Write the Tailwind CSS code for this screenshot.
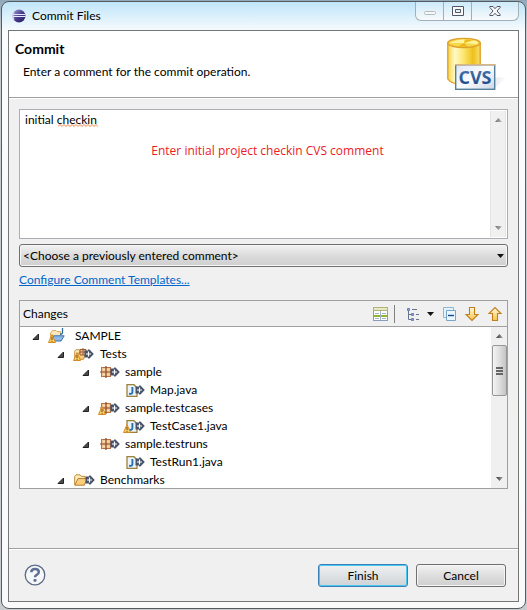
<!DOCTYPE html>
<html lang="en">
<head>
<meta charset="utf-8">
<meta name="viewport" content="width=device-width, initial-scale=1">
<title>Commit Files</title>
<script src="https://cdn.jsdelivr.net/npm/@tailwindcss/browser@4"></script>
</head>
<body class="bg-linear-to-b from-[#8fa9bb] to-[#c8ccce] to-5% font-['Lato','Open_Sans',sans-serif] text-[12px] leading-[18px] text-black">

<!-- Shared icon parts -->
<svg class="absolute size-0" aria-hidden="true">
  <defs>
    <linearGradient id="gold" x1="0" y1="0" x2="0" y2="1"><stop offset="0" stop-color="#fffbe0"/><stop offset="1" stop-color="#f7c545"/></linearGradient>
    <linearGradient id="cyl" x1="0" x2="1" y1="0" y2="0"><stop offset="0" stop-color="#f5d548"/><stop offset=".22" stop-color="#fffac8"/><stop offset=".5" stop-color="#fbe56a"/><stop offset=".78" stop-color="#efc01c"/><stop offset="1" stop-color="#f8e070"/></linearGradient>
    <linearGradient id="card" x1="0" x2="1" y1="0" y2="1"><stop offset="0" stop-color="#dfe6f2"/><stop offset=".5" stop-color="#fbfcff"/><stop offset="1" stop-color="#ccd6ea"/></linearGradient>
    <linearGradient id="shade" x1="0" x2="1" y1="0" y2="0"><stop offset="0" stop-color="#9a9ab8"/><stop offset="1" stop-color="#ffffff"/></linearGradient>
    <linearGradient id="orb" x1="0" x2="1" y1="0" y2="1"><stop offset="0" stop-color="#a9a4d6"/><stop offset=".5" stop-color="#483c8c"/><stop offset="1" stop-color="#241c5c"/></linearGradient>
    <linearGradient id="cvsText" x1="0" x2="0" y1="0" y2="1"><stop offset="0" stop-color="#5380b4"/><stop offset="1" stop-color="#123f80"/></linearGradient>
    <linearGradient id="fade" x1="0" x2="1" y1="0" y2="0"><stop offset="0" stop-color="#333"/><stop offset="1" stop-color="#aaa"/></linearGradient>
    <symbol id="expanded" viewBox="0 0 7 7"><path d="M6.5 1V6.5H1Z" fill="#4b4b4b" stroke="#222"/></symbol>
    <symbol id="outgoing" viewBox="0 0 10 10"><path d="M.5 1.5H4V.5H5.5L9.8 5 5.5 9.5H4V8.5H.5Z" fill="#46526a"/><path d="M2 5H7M4.5 2.5V7.5" stroke="#fff" stroke-width="1.2"/></symbol>
    <symbol id="warning" viewBox="0 0 8 9"><path d="M4 .6 7.5 8.5H.5Z" fill="#fbcf62" stroke="#d68a25" stroke-linejoin="round"/><path d="M4 3V6M4 6.8V7.8" stroke="#6a4408" stroke-width="1"/></symbol>
    <symbol id="package" viewBox="0 0 12 12"><rect x="1.5" y="1.5" width="9" height="9" fill="#f3c796" stroke="#b87344"/><path d="M6 0V12M0 6H12" stroke="#8a4a26" stroke-width="1.2"/><path d="M3.5 3.5h1M7.5 3.5h1M3.5 8.5h1M7.5 8.5h1" stroke="#fff0d8"/></symbol>
    <symbol id="javafile" viewBox="0 0 12 13"><path d="M1 .7H8L11 3.7V12.3H1Z" fill="#eaf2fc" stroke="#9b8238" stroke-width="1.3"/><path d="M6.4 3V8.3Q6.4 10.3 3 9.8" fill="none" stroke="#2c6fa8" stroke-width="1.9"/></symbol>
    <symbol id="folder" viewBox="0 0 14 12"><path d="M.7 10.8V2.3L2 .8H6L7.3 2.3H11V4.5" fill="#fdebb8" stroke="#c08a3a"/><path d="M.8 11.2 4 4.6H13.2L10.2 11.2Z" fill="#f9cf7c" stroke="#b97c30"/></symbol>
    <symbol id="arrowUp" viewBox="0 0 7 4"><path d="M3.5 0 7 4H0Z" fill="url(#fade)"/></symbol>
    <symbol id="arrowDown" viewBox="0 0 7 4"><path d="M0 0H7L3.5 4Z" fill="url(#fade)"/></symbol>
    <symbol id="caret" viewBox="0 0 7 4"><path d="M0 0H7L3.5 4Z" fill="#111"/></symbol>
  </defs>
</svg>

<div class="flex min-h-screen flex-col p-px">
<main class="flex flex-1 flex-col rounded-lg border border-[#565b5f] bg-linear-to-b from-[#bfe5fa] via-[#fafcfd] via-5% to-[#fafafa] px-1.5 pb-1.5">

  <!-- Title bar -->
  <header class="flex h-7 items-start justify-between pl-1">
    <div class="flex items-center gap-1.5 pt-[5px]">
      <svg class="h-3.5 w-3.5" viewBox="0 0 14 14" aria-hidden="true"><circle cx="7" cy="7" r="6.5" fill="url(#orb)"/><path d="M.5 5.5H13.5M.3 7.5H13.7" stroke="#e6e6fa" stroke-width="1"/><path d="M2 3.5Q0 7 2 11" fill="none" stroke="#d8d0ec" stroke-width="1"/></svg>
      <h1>Commit Files</h1>
    </div>
    <div class="flex h-[19px] divide-x divide-[#a3afb6] rounded-b-md border border-t-0 border-[#a3afb6] bg-linear-to-b from-[#cdeafa] to-[#f8fafb]">
      <button type="button" aria-label="Minimize" class="flex w-7 items-center justify-center pt-1"><svg class="h-1 w-3" viewBox="0 0 12 4"><rect x=".5" y=".5" width="11" height="3" rx="1" fill="#f7f7f7" stroke="#b4bcc0"/></svg></button>
      <button type="button" aria-label="Maximize" class="flex w-7 items-center justify-center"><svg class="h-2.5 w-3" viewBox="0 0 12 10"><path d="M.5 .5H11.5V9.5H.5ZM3.5 3.5V6.5H8.5V3.5Z" fill="#f8f8f8" fill-rule="evenodd" stroke="#535666"/></svg></button>
      <button type="button" aria-label="Close" class="flex w-[46px] items-center justify-center"><svg class="h-2.5 w-3" viewBox="0 0 12 10"><path d="M.8 .5H4L6 2.7 8 .5H11.2V1.4L8 5 11.2 8.6V9.5H8L6 7.3 4 9.5H.8V8.6L4 5 .8 1.4Z" fill="#f8f8f8" stroke="#535666"/></svg></button>
    </div>
  </header>

  <div class="flex flex-1 flex-col border border-[#747678] bg-[#f0f0f0]">

    <!-- Banner -->
    <section class="flex h-[67px] items-start justify-between border-b border-[#a0a0a0] bg-white pr-2 pl-1.5">
      <div class="pt-2">
        <h2 class="text-[14px] leading-[20px] font-bold">Commit</h2>
        <p class="pt-1 pl-2">Enter a comment for the commit operation.</p>
      </div>
      <svg class="h-[60px] w-[66px]" viewBox="0 0 66 60" role="img" aria-label="CVS repository">
        <path d="M54 46 63 46.5 48 59H24Z" fill="url(#shade)" opacity=".6"/>
        <path d="M3.8 12V48Q7 53.3 20 53.3 33 53.3 36.2 48V12Z" fill="url(#cyl)" stroke="#e0a02c" stroke-width="1.4"/>
        <ellipse cx="20" cy="12" rx="16.2" ry="4.6" fill="#f7d84a" stroke="#e0a02c" stroke-width="1.4"/>
        <path d="M6 12Q12 8.5 20 8.4L20 12ZM20 12 31 9.5Q35 11 33 13Z" fill="#fff4a0"/>
        <path d="M20 12 22 8.5 28 9.2ZM20 12 14 15.5 24 16Z" fill="#e9b91f"/>
        <rect x="11.7" y="33.7" width="39" height="24.6" fill="url(#card)" stroke="#56809a" stroke-width="1.4"/>
        <path d="M11 33.7H51" stroke="#d8b684" stroke-width="1.4"/>
        <text x="31" y="53" text-anchor="middle" font-family="Open Sans, Noto Sans, sans-serif" font-weight="700" font-size="18" fill="url(#cvsText)">CVS</text>
      </svg>
    </section>

    <form class="flex flex-1 flex-col border-t border-white">
      <div class="flex flex-col px-2.5 pt-2.5">

        <!-- Comment box -->
        <div class="relative flex border border-[#abadb3] bg-white p-px">
          <label for="comment" class="sr-only">Comment</label>
          <textarea id="comment" spellcheck="false" class="h-[126px] flex-1 resize-none overflow-hidden bg-white pl-1 outline-none">initial checkin</textarea>
          <svg class="pointer-events-none absolute top-[14px] left-[38px] h-[3px] w-[41px]" viewBox="0 0 41 3" aria-hidden="true"><path d="M0 2.5 2 .5 4 2.5 6 .5 8 2.5 10 .5 12 2.5 14 .5 16 2.5 18 .5 20 2.5 22 .5 24 2.5 26 .5 28 2.5 30 .5 32 2.5 34 .5 36 2.5 38 .5 40 2.5" fill="none" stroke="#f08040" stroke-width="1"/></svg>
          <p class="pointer-events-none absolute inset-x-0 top-8 pr-3 pl-5 text-center font-['Open_Sans'] text-[#ed1c24]">Enter initial project checkin CVS comment</p>
          <div class="flex w-4 flex-col items-center justify-between border-x border-[#e4e4e4] bg-[#f0f0f0] py-[7px]" aria-hidden="true">
            <svg class="h-1 w-[7px] opacity-70"><use href="#arrowUp"/></svg>
            <svg class="h-1 w-[7px] opacity-70"><use href="#arrowDown"/></svg>
          </div>
        </div>

        <!-- Previous comments -->
        <div class="relative mt-[5px]">
          <label for="previous" class="sr-only">Previous comments</label>
          <select id="previous" class="block h-[23px] w-full appearance-none rounded-[3px] border border-[#707070] bg-linear-to-b from-[#f2f2f2] from-0% via-[#dcdcdc] via-50% to-[#cfcfcf] pl-[3px] leading-[20px] shadow-[inset_0_0_0_1px_#f6f6f6]">
            <option>&lt;Choose a previously entered comment&gt;</option>
          </select>
          <svg class="pointer-events-none absolute top-[10px] right-1 h-1 w-[7px]" aria-hidden="true"><use href="#caret"/></svg>
        </div>

        <a href="#" class="mt-1 self-start text-[#0066cc] underline">Configure Comment Templates...</a>

        <!-- Changes -->
        <section class="mt-[11px] border border-[#a0a0a0]">
          <div class="flex h-[26px] items-center justify-between border-b border-[#a0a0a0] pr-1 pl-[3px]">
            <h3>Changes</h3>
            <div class="flex items-center">
              <button type="button" aria-label="Show compare pane" class="size-4"><svg class="size-4" viewBox="0 0 16 16"><rect x="1.5" y="1.5" width="14" height="13" fill="#fff" stroke="#8a9cba"/><path d="M1.5 1.5H15.5V4.5H1.5Z" fill="#e6e8c4" stroke="#b3b47c"/><path d="M3 7.5H7M10 7.5H14M3 12.5H7M10 12.5H14" stroke="#9db4c4"/><path d="M2 10H15" stroke="#8fb52a" stroke-width="2"/><path d="M8.5 5V14" stroke="#a8b4c4"/></svg></button>
              <span class="mr-[10px] ml-1.5 h-[18px] w-px bg-[#808080]"></span>
              <button type="button" aria-label="Presentation" class="flex items-center gap-1.5"><svg class="size-4" viewBox="0 0 16 16"><path d="M3.5 3V13.5H7M3.5 8.5H7" fill="none" stroke="#66748e"/><path d="M2.5 2.5H4.5V4.5H2.5ZM6.5 7.5H8.5V9.5H6.5ZM6.5 12.5H8.5V14.5H6.5Z" fill="#8b9dd0" stroke="#6d7fb6"/><path d="M7 3.5H12M11 8.5H14M11 13.5H14" stroke="#66748e"/></svg><svg class="h-1 w-[7px]"><use href="#caret"/></svg></button>
              <button type="button" aria-label="Collapse all" class="ml-[7px] size-4"><svg class="size-4" viewBox="0 0 16 16"><path d="M2.5 1.5H12.5V11.5H2.5Z" fill="#dff3fb" stroke="#8fb9ce"/><path d="M5.5 4.5H14.5V14.5H5.5Z" fill="#e8f6fd" stroke="#7ba3c4"/><path d="M7 9.5H13" stroke="#164a86" stroke-width="1.4"/></svg></button>
              <button type="button" aria-label="Next change" class="ml-[7px] size-4"><svg class="size-4" viewBox="0 0 16 16"><path d="M5.5 1.5H10.5V8.5H14L8 14.5 2 8.5H5.5Z" fill="url(#gold)" stroke="#bf7f1d" stroke-width="1.1"/></svg></button>
              <button type="button" aria-label="Previous change" class="ml-[7px] size-4"><svg class="size-4" viewBox="0 0 16 16"><path d="M5.5 14.5H10.5V7.5H14L8 1.5 2 7.5H5.5Z" fill="url(#gold)" stroke="#bf7f1d" stroke-width="1.1"/></svg></button>
            </div>
          </div>

          <div class="flex h-[161px] bg-white">
            <ul role="tree" aria-label="Changes" class="flex-1 overflow-hidden">
              <li role="treeitem" class="flex h-[18px] items-center pl-3">
                <svg class="mr-[9px] size-[7px]"><use href="#expanded"/></svg>
                <svg class="mr-[3px] h-[18px] w-6" viewBox="0 0 24 18"><path d="M2.5 11V6L4.5 3.5H8L9 4.5H12.5V9" fill="#fbe7ba" stroke="#d9ae68"/><path d="M5 14 5.5 8.8H16.2L13 14Z" fill="#8dbaea" stroke="#3c6fae"/><path d="M14.5 1V5.5Q14.5 7.4 12 7" fill="none" stroke="#2f6aa4" stroke-width="1.3"/><use href="#warning" y="7" width="8" height="9"/></svg>
                <span>SAMPLE</span>
              </li>
              <li role="treeitem" class="flex h-[18px] items-center pl-[37px]">
                <svg class="mr-[9px] size-[7px]"><use href="#expanded"/></svg>
                <svg class="mr-[3px] h-[18px] w-6" viewBox="0 0 24 18"><use href="#folder" x="1" y="4" width="13" height="11"/><path d="M7 4.5H13V10H7ZM10 3V10M6 7H13" fill="#f0c592" stroke="#9a5a30"/><use href="#outgoing" x="11" y="4" width="10" height="10"/><use href="#warning" y="7" width="8" height="9"/></svg>
                <span>Tests</span>
              </li>
              <li role="treeitem" class="flex h-[18px] items-center pl-[62px]">
                <svg class="mr-[9px] size-[7px]"><use href="#expanded"/></svg>
                <svg class="mr-[3px] h-[18px] w-6" viewBox="0 0 24 18"><use href="#package" x="2" y="3" width="12" height="12"/><use href="#outgoing" x="12" y="4" width="10" height="10"/></svg>
                <span>sample</span>
              </li>
              <li role="treeitem" class="flex h-[18px] items-center pl-[103px]">
                <svg class="mr-[3px] h-[18px] w-6" viewBox="0 0 24 18"><use href="#javafile" x="3" y="3" width="12" height="13"/><use href="#outgoing" x="12" y="4" width="10" height="10"/></svg>
                <span>Map.java</span>
              </li>
              <li role="treeitem" class="flex h-[18px] items-center pl-[62px]">
                <svg class="mr-[9px] size-[7px]"><use href="#expanded"/></svg>
                <svg class="mr-[3px] h-[18px] w-6" viewBox="0 0 24 18"><use href="#package" x="2" y="3" width="12" height="12"/><use href="#outgoing" x="12" y="4" width="10" height="10"/><use href="#warning" y="7" width="8" height="9"/></svg>
                <span>sample.testcases</span>
              </li>
              <li role="treeitem" class="flex h-[18px] items-center pl-[103px]">
                <svg class="mr-[3px] h-[18px] w-6" viewBox="0 0 24 18"><use href="#javafile" x="3" y="3" width="12" height="13"/><use href="#outgoing" x="12" y="4" width="10" height="10"/><use href="#warning" y="7" width="8" height="9"/></svg>
                <span>TestCase1.java</span>
              </li>
              <li role="treeitem" class="flex h-[18px] items-center pl-[62px]">
                <svg class="mr-[9px] size-[7px]"><use href="#expanded"/></svg>
                <svg class="mr-[3px] h-[18px] w-6" viewBox="0 0 24 18"><use href="#package" x="2" y="3" width="12" height="12"/><use href="#outgoing" x="12" y="4" width="10" height="10"/></svg>
                <span>sample.testruns</span>
              </li>
              <li role="treeitem" class="flex h-[18px] items-center pl-[103px]">
                <svg class="mr-[3px] h-[18px] w-6" viewBox="0 0 24 18"><use href="#javafile" x="3" y="3" width="12" height="13"/><use href="#outgoing" x="12" y="4" width="10" height="10"/></svg>
                <span>TestRun1.java</span>
              </li>
              <li role="treeitem" class="flex h-[18px] items-center pl-[37px]">
                <svg class="mr-[9px] size-[7px]"><use href="#expanded"/></svg>
                <svg class="mr-[3px] h-[18px] w-6" viewBox="0 0 24 18"><use href="#folder" x="1" y="3" width="14" height="12"/><use href="#outgoing" x="12" y="4" width="10" height="10"/></svg>
                <span>Benchmarks</span>
              </li>
            </ul>
            <div class="flex w-4 flex-col items-center bg-[#f0f0f0]" aria-hidden="true">
              <svg class="my-[7px] h-1 w-[7px]"><use href="#arrowUp"/></svg>
              <div class="flex h-[51px] w-[15px] flex-col items-center justify-center gap-px rounded-[2px] border border-[#979797] bg-linear-to-r from-[#f4f4f4] via-[#dedede] to-[#c4c4c4]">
                <span class="h-0.5 w-[7px] bg-[#666]"></span><span class="h-0.5 w-[7px] bg-[#666]"></span><span class="h-0.5 w-[7px] bg-[#666]"></span>
              </div>
              <svg class="mt-auto mb-[7px] h-1 w-[7px]"><use href="#arrowDown"/></svg>
            </div>
          </div>
        </section>
      </div>

      <!-- Actions -->
      <footer class="mt-auto border-t border-[#a0a0a0]">
        <div class="flex items-start justify-between border-t border-white px-3 pt-3.5 pb-3.5">
          <button type="button" aria-label="Help" class="ml-[3px]"><svg class="size-[22px]" viewBox="0 0 22 22"><circle cx="11" cy="11" r="9.8" fill="#f6f7f9" stroke="#5b6a86" stroke-width="1.3"/><path d="M7.3 8.3Q7.3 5 11 5 14.8 5 14.8 8 14.8 9.8 12.7 10.8 11 11.6 11 13.3" fill="none" stroke="#5f6f92" stroke-width="2.5"/><rect x="9.5" y="15" width="3" height="2.7" rx=".8" fill="#5f6f92"/></svg></button>
          <div class="flex gap-2">
            <button type="submit" class="h-[23px] w-[90px] rounded-[3px] border border-[#3c7fb1] bg-linear-to-b from-[#f0f0f0] via-[#dfe3e6] via-50% to-[#cfd2d4] leading-[20px] shadow-[inset_0_0_0_1px_#48c8f4]">Finish</button>
            <button type="button" class="h-[23px] w-[90px] rounded-[3px] border border-[#707070] bg-linear-to-b from-[#f2f2f2] via-[#dedede] via-50% to-[#cfcfcf] leading-[20px] shadow-[inset_0_0_0_1px_#f6f6f6]">Cancel</button>
          </div>
        </div>
      </footer>
    </form>
  </div>
</main>
</div>
</body>
</html>
